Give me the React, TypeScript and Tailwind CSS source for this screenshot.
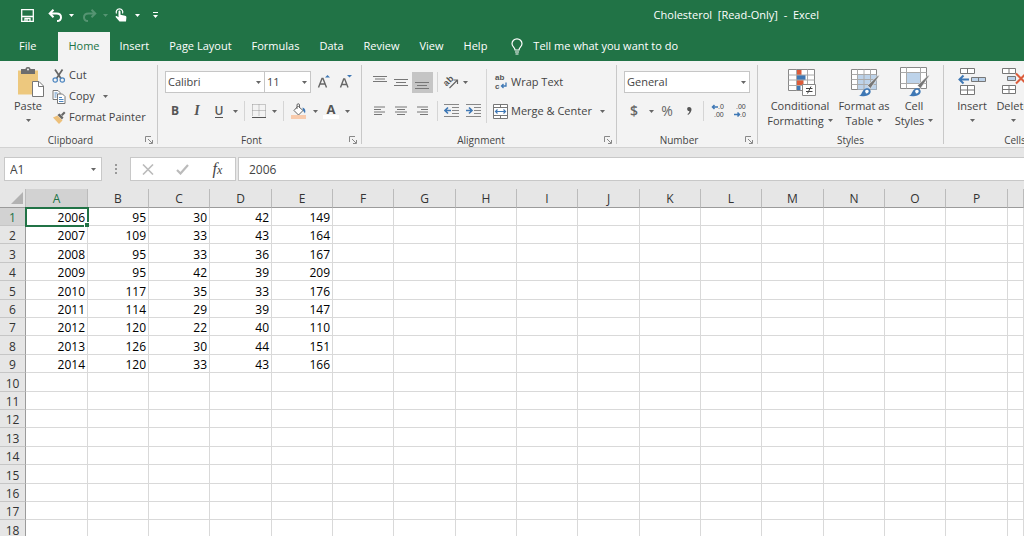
import type { ReactNode } from "react";

const columns = ["A", "B", "C", "D", "E", "F", "G", "H", "I", "J", "K", "L", "M", "N", "O", "P", ""];

const data = [
  [2006, 95, 30, 42, 149],
  [2007, 109, 33, 43, 164],
  [2008, 95, 33, 36, 167],
  [2009, 95, 42, 39, 209],
  [2010, 117, 35, 33, 176],
  [2011, 114, 29, 39, 147],
  [2012, 120, 22, 40, 110],
  [2013, 126, 30, 44, 151],
  [2014, 120, 33, 43, 166],
];

const tabs = ["Insert", "Page Layout", "Formulas", "Data", "Review", "View", "Help"];

function Caret({ className = "text-[#666]" }: { className?: string }) {
  return (
    <svg width="5" height="3" viewBox="0 0 5 3" className={`shrink-0 ${className}`} fill="currentColor">
      <path d="M0 0h5L2.5 3z" />
    </svg>
  );
}

function CaretButton({ label, className = "text-[#666]" }: { label: string; className?: string }) {
  return (
    <button aria-label={label} className="flex h-5 w-[10px] items-center justify-center">
      <Caret className={className} />
    </button>
  );
}

function Tool({ label, className = "w-[22px]", children }: { label: string; className?: string; children: ReactNode }) {
  return (
    <button aria-label={label} className={`flex h-[21px] shrink-0 items-center justify-center ${className}`}>
      {children}
    </button>
  );
}

function Group({ label, className, launcher = true, children }: { label: string; className: string; launcher?: boolean; children: ReactNode }) {
  return (
    <section aria-label={label} className={`flex shrink-0 flex-col ${className}`}>
      <div className="flex h-[68px]">{children}</div>
      <div className="flex h-[14px] items-center text-[10px] leading-[14px] text-[#444]">
        <span className="flex-1 text-center">{label}</span>
        {launcher && (
          <button aria-label={`${label} settings`} className="w-4">
            <svg width="8" height="8" viewBox="0 0 8 8" fill="none" stroke="#888" className="ml-1">
              <path d="M.5 6V.5H6M3 3l4 4M7.500 4v3.500H4" />
            </svg>
          </button>
        )}
      </div>
    </section>
  );
}

function GroupLine() {
  return <div className="h-[79px] w-px shrink-0 bg-[#c8c8c8]" />;
}

function Sep({ className = "" }: { className?: string }) {
  return <div className={`h-5 w-px shrink-0 bg-[#d5d5d5] ${className}`} />;
}

function Select({ label, value, className }: { label: string; value: string; className: string }) {
  return (
    <div className={`relative shrink-0 ${className}`}>
      <select aria-label={label} className="block h-[22px] w-full appearance-none border border-[#c6c6c6] bg-white pl-[2px] text-[11px] text-[#444] outline-none">
        <option>{value}</option>
      </select>
      <span className="pointer-events-none absolute inset-y-0 right-1 flex items-center">
        <Caret />
      </span>
    </div>
  );
}

function BigButton({ lines, caretBelow = false, className, children }: { lines: string[]; caretBelow?: boolean; className: string; children: ReactNode }) {
  return (
    <button className={`flex shrink-0 flex-col items-center pt-[2px] text-[11px] leading-[15px] text-[#444] ${className}`}>
      {children}
      <span className="mt-px whitespace-nowrap">{lines[0]}</span>
      <span className="flex h-[15px] items-center gap-1 whitespace-nowrap">
        {lines[1]}
        {(caretBelow || lines[1]) && <Caret />}
      </span>
    </button>
  );
}

function Lines({ d }: { d: string }) {
  return (
    <svg width="15" height="15" viewBox="0 0 15 15" fill="none" stroke="#777">
      <path d={d} />
    </svg>
  );
}

function Brush() {
  return (
    <g>
      <path d="M29.500 8.500l-9 13-3-3L28 8.500z" fill="#777" stroke="#f3f3f3" strokeWidth=".6" />
      <path d="M8.500 29c3-.5 3-3.500 5-6 2-2.300 5-2.200 6.400-.6 1.600 2 .6 4.600-2 5.800-3 1.300-6 1-9.400.8z" fill="#3f78b5" />
      <path d="M15 24c1-1.500 3-1.500 3.600-.3.500 1.300-.6 2.600-2.600 2.800z" fill="#fff" />
    </g>
  );
}

function QuickAccess() {
  return (
    <div className="flex items-center text-white">
      <Tool label="Save" className="ml-4 w-[22px]">
        <svg width="13" height="13" viewBox="0 0 13 13" fill="none" stroke="currentColor" strokeWidth="1.300">
          <path d="M.7.7h11.600v11.600H.7zM1 7.500h11" />
          <path d="M4 12V9.500h5V12M6 10v2" />
        </svg>
      </Tool>
      <Tool label="Undo" className="ml-[6px] w-[22px]">
        <svg width="15" height="13" viewBox="0 0 15 13" fill="none" stroke="currentColor" strokeWidth="2">
          <path d="M5.500.7L1.700 4.500l3.800 3.800M2 4.500h6.500c3 0 4.500 1.500 4.500 3.700S11.500 12 9 12" />
        </svg>
      </Tool>
      <CaretButton label="Undo history" className="text-white" />
      <Tool label="Redo" className="ml-[2px] w-[22px] text-[#559472]">
        <svg width="15" height="13" viewBox="0 0 15 13" fill="none" stroke="currentColor" strokeWidth="2">
          <path d="M9.500.7l3.800 3.800-3.800 3.800M13 4.500H6.500C3.500 4.500 2 6 2 8.200S3.500 12 6 12" />
        </svg>
      </Tool>
      <CaretButton label="Redo history" className="text-[#559472]" />
      <Tool label="Touch mode" className="w-[22px]">
        <svg width="12" height="14" viewBox="0 0 12 14">
          <path d="M1.500 5.500a3.300 3.300 0 1 1 6 0" fill="none" stroke="currentColor" strokeWidth="1.200" />
          <path d="M3.500 3.500c0-1.400 2-1.400 2 0v3.300l4.500.9c1 .2 1.500.8 1.400 1.800L11 13.500H4.500L.8 9.300c-.7-1 .4-1.800 1.300-1.100l1.400 1z" fill="currentColor" />
        </svg>
      </Tool>
      <CaretButton label="Touch options" className="text-white" />
      <Tool label="Customize" className="ml-[2px] w-[22px]">
        <svg width="5" height="6" viewBox="0 0 5 6" fill="currentColor">
          <path d="M0 0h5v1H0zM0 3h5L2.500 6z" />
        </svg>
      </Tool>
    </div>
  );
}

function Clipboard() {
  return (
    <Group label="Clipboard" className="w-[157px]">
      <BigButton lines={["Paste", ""]} caretBelow className="w-14">
        <svg width="30" height="30" viewBox="0 0 30 30" className="ml-1">
          <path d="M3 3.500h20v24H3z" fill="#edc87e" />
          <path d="M6 2h4.500c0-2.700 5-2.700 5 0H20v5H6z" fill="#6d6d6d" />
          <circle cx="13" cy="2.500" r="1" fill="#f3f3f3" />
          <path d="M17.500 14.500h6.500l4.500 4.500v10.500h-11z" fill="#fff" stroke="#777" />
          <path d="M23.500 14.500V19.500h5" fill="none" stroke="#777" />
        </svg>
      </BigButton>
      <div className="text-[11px] text-[#444]">
        <button className="-ml-1 flex h-[21px] items-center gap-[3px]">
          <svg width="14" height="14" viewBox="0 0 14 14" fill="none">
            <path d="M3 .5l6 9M10.500.5l-6 9" stroke="#666" strokeWidth="1.700" />
            <circle cx="3.200" cy="11" r="2.200" stroke="#4d86c0" strokeWidth="1.200" />
            <circle cx="10.300" cy="11" r="2.200" stroke="#4d86c0" strokeWidth="1.200" />
          </svg>
          Cut
        </button>
        <div className="flex">
          <button className="-ml-1 flex h-[21px] items-center gap-[3px]">
            <svg width="14" height="14" viewBox="0 0 14 14" fill="#fff" stroke="#777">
              <path d="M1 .5h5l2 2v7H1z" />
              <path d="M5.500 4h5l2.500 2.500v7H5.500z" />
              <path d="M2.500 3h3M2.500 5h2M2.500 7h2M7 7.500h3M7 9.500h4.500M7 11.500h4.500" stroke="#4d86c0" />
            </svg>
            Copy
          </button>
          <span className="ml-[6px]">
            <CaretButton label="Copy options" />
          </span>
        </div>
        <button className="-ml-1 flex h-[21px] items-center gap-[3px] whitespace-nowrap">
          <svg width="14" height="14" viewBox="0 0 14 14">
            <path d="M1 6.500l4.500-2 5 5L7 13z" fill="#edc07a" />
            <path d="M5.500 4l2-1.500 4 4-1.500 2z" fill="#666" />
            <path d="M9 3.500L12 .5l1.500 1.500-3 3z" fill="#666" />
          </svg>
          Format Painter
        </button>
      </div>
    </Group>
  );
}

function FontGroup() {
  return (
    <Group label="Font" className="w-[203px]">
      <div className="pl-[7px] text-[#555]">
        <div className="flex h-[34px] items-center">
          <Select label="Font" value="Calibri" className="w-[100px]" />
          <Select label="Font size" value="11" className="-ml-px w-[47px]" />
          <Tool label="Increase font size" className="ml-[2px] w-[22px]">
            <svg width="14" height="16" viewBox="0 0 14 16" fill="none">
              <path d="M1.500 13.500l3.500-9h1l3.500 9M3 10h5" stroke="#666" strokeWidth="1.400" />
              <path d="M8 3.500h5L10.500 1z" fill="#3f78b5" />
            </svg>
          </Tool>
          <Tool label="Decrease font size">
            <svg width="14" height="16" viewBox="0 0 14 16" fill="none">
              <path d="M1.500 13.500L4.700 5h1L9 13.500M3 10.500h5" stroke="#666" strokeWidth="1.400" />
              <path d="M8 1h5l-2.500 2.500z" fill="#3f78b5" />
            </svg>
          </Tool>
        </div>
        <div className="-ml-px flex h-6 items-center">
          <Tool label="Bold">
            <b className="text-xs">B</b>
          </Tool>
          <Tool label="Italic">
            <i className="font-['Liberation_Serif',serif] text-sm font-bold">I</i>
          </Tool>
          <Tool label="Underline">
            <span className="border-b border-[#555] text-xs font-semibold leading-[13px]">U</span>
          </Tool>
          <CaretButton label="Underline styles" />
          <Sep className="mx-1" />
          <Tool label="Borders" className="w-[20px]">
            <svg width="14" height="14" viewBox="0 0 14 14" fill="none" stroke="#999">
              <path d="M.5.5h13v12M.5.5v12M7 .5v12M.5 6.500h13" strokeDasharray="1 1" />
              <path d="M0 13.500h14" stroke="#555" />
            </svg>
          </Tool>
          <CaretButton label="Border styles" />
          <Sep className="mx-1" />
          <Tool label="Fill color">
            <svg width="16" height="16" viewBox="0 0 16 16" fill="none">
              <path d="M6.500 3.500l-3.500 4 4.500 4.500 4.500-4.500-4.500-4z" fill="#fff" stroke="#666" />
              <path d="M6 6V2c0-1.700 2.500-1.700 2.500 0v3" stroke="#666" />
              <path d="M11.500 4.500c2.500.5 3.500 2.500 2.500 6l-2-3z" fill="#3f78b5" />
              <path d="M0 12h15v4H0z" fill="#f8cbad" />
            </svg>
          </Tool>
          <CaretButton label="Fill colors" />
          <Tool label="Font color">
            <span className="border-b-4 border-white px-1 text-[13px] font-bold leading-3">A</span>
          </Tool>
          <CaretButton label="Font colors" />
        </div>
      </div>
    </Group>
  );
}

function Alignment() {
  return (
    <Group label="Alignment" className="w-[254px]">
      <div className="pl-2">
        <div className="flex h-[34px] items-center">
          <Tool label="Top align" className="w-[21px]">
            <Lines d="M0 1.500h14M2 4h10M0 6.500h14" />
          </Tool>
          <Tool label="Middle align" className="w-[21px]">
            <Lines d="M0 4.500h14M2 7.500h10M0 10.500h14" />
          </Tool>
          <Tool label="Bottom align" className="w-[21px] bg-[#c5c5c5]">
            <Lines d="M0 7.500h14M2 10.500h10M0 13.500h14" />
          </Tool>
          <Sep className="mx-1" />
          <Tool label="Orientation" className="w-[18px]">
            <svg width="16" height="14" viewBox="0 0 16 14" fill="none" stroke="#666" className="overflow-visible">
              <text x="0" y="9" transform="rotate(-45 5 6)" fontSize="9" fill="#555" stroke="none" className="font-['Liberation_Sans',sans-serif] font-bold">
                ab
              </text>
              <path d="M6.500 13l7.500-7.500M10.500 5h4v4" strokeWidth="1.200" />
            </svg>
          </Tool>
          <CaretButton label="Orientation options" />
        </div>
        <div className="flex h-6 items-center">
          <Tool label="Align left" className="w-[21px]">
            <Lines d="M1 3h11M1 5.500h7M1 8h11M1 10.500h8" />
          </Tool>
          <Tool label="Center" className="w-[21px]">
            <Lines d="M1 3h12M3 5.500h8M1 8h12M3 10.500h8" />
          </Tool>
          <Tool label="Align right" className="w-[21px]">
            <Lines d="M2 3h11M6 5.500h7M2 8h11M5 10.500h8" />
          </Tool>
          <Sep className="mx-1" />
          <Tool label="Decrease indent" className="w-[18px]">
            <svg width="15" height="14" viewBox="0 0 15 14" fill="none" stroke="#888">
              <path d="M0 .500h15M8 3.500h7M8 6.500h7M8 9.500h7M0 12.500h15" />
              <path d="M7 6.500H1.500M4 3.500l-3 3 3 3" stroke="#3f78b5" strokeWidth="1.600" />
            </svg>
          </Tool>
          <Tool label="Increase indent" className="ml-1 w-[18px]">
            <svg width="15" height="14" viewBox="0 0 15 14" fill="none" stroke="#888">
              <path d="M0 .500h15M8 3.500h7M8 6.500h7M8 9.500h7M0 12.500h15" />
              <path d="M0 6.500h5.500M3 3.500l3 3-3 3" stroke="#3f78b5" strokeWidth="1.600" />
            </svg>
          </Tool>
        </div>
      </div>
      <div className="ml-1 mt-1 h-[54px] w-px bg-[#d5d5d5]" />
      <div className="pl-[6px] text-[11px] text-[#444]">
        <button className="flex h-[34px] items-center gap-[2px] whitespace-nowrap">
          <svg width="16" height="16" viewBox="0 0 16 16" fill="none" className="overflow-visible">
            <g fontSize="8" fill="#555" className="font-['Liberation_Sans',sans-serif] font-bold">
              <text x="2" y="6">ab</text>
              <text x="2" y="15">c</text>
            </g>
            <path d="M13 8.500v3.500H8.500M10.500 10l-2 2 2 2" stroke="#3f78b5" strokeWidth="1.300" />
          </svg>
          Wrap Text
        </button>
        <div className="flex h-6 items-center">
          <button className="flex items-center gap-[2px] whitespace-nowrap">
            <svg width="16" height="15" viewBox="0 0 16 15" fill="none" stroke="#777">
              <path d="M.5.500h14v14H.5z" fill="#fff" />
              <path d="M.5 3.500h14M.5 11.500h14M7.500.5v3M7.500 11.500v3" />
              <path d="M2.500 7.500h10M4.500 5.500l-2 2 2 2M10.500 5.500l2 2-2 2" stroke="#3f78b5" strokeWidth="1.200" />
            </svg>
            Merge &amp; Center
          </button>
          <span className="ml-[6px]">
            <CaretButton label="Merge options" />
          </span>
        </div>
      </div>
    </Group>
  );
}

function NumberGroup() {
  return (
    <Group label="Number" className="w-[140px]">
      <div className="pl-[7px] text-[#666]">
        <div className="flex h-[34px] items-center">
          <Select label="Number format" value="General" className="w-[126px]" />
        </div>
        <div className="flex h-6 items-center">
          <Tool label="Accounting format" className="w-5">
            <span className="text-sm font-semibold">$</span>
          </Tool>
          <span className="ml-[2px]">
            <CaretButton label="Currencies" />
          </span>
          <Tool label="Percent">
            <span className="text-sm">%</span>
          </Tool>
          <Tool label="Comma style">
            <svg width="5" height="8" viewBox="0 0 5 8" fill="#555">
              <path d="M2 0c3.500 0 3.500 5-1 8L.5 7C2 6 2.500 5 2.300 4-.5 4-.5 0 2 0z" />
            </svg>
          </Tool>
          <Sep className="mx-[3px]" />
          <Tool label="Increase decimal">
            <svg width="14" height="14" viewBox="0 0 14 14" fill="none" className="overflow-visible">
              <g fontSize="7" fill="#444" className="font-['Liberation_Sans',sans-serif]">
                <text x="7" y="5">.0</text>
                <text x="3" y="13">.00</text>
              </g>
              <path d="M7 3H2M3.500 1l-2 2 2 2" stroke="#3f78b5" strokeWidth="1.500" />
            </svg>
          </Tool>
          <Tool label="Decrease decimal">
            <svg width="14" height="14" viewBox="0 0 14 14" fill="none" className="overflow-visible">
              <g fontSize="7" fill="#444" className="font-['Liberation_Sans',sans-serif]">
                <text x="3" y="5">.00</text>
                <text x="7" y="13">.0</text>
              </g>
              <path d="M1 10.500h5M4.500 8.500l2 2-2 2" stroke="#3f78b5" strokeWidth="1.500" />
            </svg>
          </Tool>
        </div>
      </div>
    </Group>
  );
}

function Styles() {
  return (
    <Group label="Styles" className="w-[185px]" launcher={false}>
      <BigButton lines={["Conditional", "Formatting"]} className="ml-[10px] w-16">
        <svg width="30" height="30" viewBox="0 0 30 30" className="ml-1">
          <path d="M1.500 2.500h26v21h-26z" fill="#fff" stroke="#888" />
          <path d="M9.500 3h5v5h-5zM9.500 13h7v5h-7z" fill="#dc5c3b" />
          <path d="M9.500 8h9v5h-9zM9.500 18h4v5h-4z" fill="#3f78b5" />
          <path d="M9.500 2.500v21M20.500 2.500v21M1.500 8h26M1.500 13h26M1.500 18.500h26" fill="none" stroke="#aaa" />
          <path d="M15.500 17.500h13v11h-13z" fill="#fff" stroke="#888" />
          <path d="M19 21.500h6.500M19 24.500h6.500M24 19.500l-3.500 7" fill="none" stroke="#444" />
        </svg>
      </BigButton>
      <BigButton lines={["Format as", "Table"]} className="w-16">
        <svg width="30" height="30" viewBox="0 0 30 30" className="ml-[2px]">
          <path d="M1.500 2.500h25v20h-25z" fill="#fff" stroke="#888" />
          <path d="M8 8h18.500v14.500H8z" fill="#bdd3ea" />
          <path d="M7.500 2.500v20M14 2.500v20M20.500 2.500v20M1.500 7.500h25M1.500 12.500h25M1.500 17.500h25" fill="none" stroke="#aaa" />
          <Brush />
        </svg>
      </BigButton>
      <BigButton lines={["Cell", "Styles"]} className="w-9">
        <svg width="30" height="30" viewBox="0 0 30 30" className="ml-[2px] shrink-0">
          <path d="M.500.500h26v21H.500z" fill="#fff" stroke="#888" />
          <path d="M6.500 6h14v10h-14z" fill="#bdd3ea" />
          <path d="M6.500.5v21M20.500.5v21M.5 5.500h26M.5 16.500h26" fill="none" stroke="#aaa" />
          <Brush />
        </svg>
      </BigButton>
    </Group>
  );
}

function Cells() {
  return (
    <Group label="Cells" className="w-[142px]" launcher={false}>
      <BigButton lines={["Insert", ""]} caretBelow className="ml-2 w-10">
        <svg width="30" height="30" viewBox="0 0 30 30" fill="#fff" stroke="#777">
          <path d="M3.500 1.500h14v5h-14zM10.500 1.500v5M3.500 18.500h14v9h-14zM10.500 18.500v9M3.500 23h14" />
          <path d="M14.500 10.500h14v4h-14zM21.500 10.500v4" fill="#bdd3ea" />
          <path d="M12 12.500H3M6.500 8.500l-4 4 4 4" fill="none" stroke="#3f78b5" strokeWidth="2" />
        </svg>
      </BigButton>
      <BigButton lines={["Delete", ""]} caretBelow className="ml-px w-10">
        <svg width="30" height="30" viewBox="0 0 30 30" fill="#fff" stroke="#777">
          <path d="M4.500 1.500h13v5h-13zM11 1.500v5M4.500 18.500h13v8h-13zM11 18.500v8M4.500 22.500h13" />
          <path d="M9.500 9.500h8v4h-8z" fill="#bdd3ea" />
          <path d="M18 6.500l10 10M28 6.500l-10 10" fill="none" stroke="#dc5c3b" strokeWidth="2" />
        </svg>
      </BigButton>
    </Group>
  );
}

function FormulaBar() {
  return (
    <div className="flex shrink-0 bg-[#e6e6e6] pt-[9px] pb-[8px] text-xs text-[#444]">
      <div className="relative ml-1 h-6 w-[98px]">
        <input aria-label="Name box" defaultValue="A1" className="h-6 w-full border border-[#c8c8c8] bg-white pl-[5px] outline-none" />
        <span className="absolute right-1 top-[2px]">
          <CaretButton label="Named cells" />
        </span>
      </div>
      <div className="flex h-6 w-7 items-center justify-center">
        <svg width="2" height="10" viewBox="0 0 2 10" fill="#999">
          <path d="M0 0h2v2H0zM0 4h2v2H0zM0 8h2v2H0z" />
        </svg>
      </div>
      <div className="flex h-6 w-[106px] items-center border border-[#c8c8c8] bg-white pl-[5px]">
        <Tool label="Cancel" className="w-[23px]">
          <svg width="12" height="11" viewBox="0 0 12 11" fill="none" stroke="#bbb" strokeWidth="1.600">
            <path d="M1 .5l10 10M11 .5l-10 10" />
          </svg>
        </Tool>
        <Tool label="Enter" className="ml-3 w-[23px]">
          <svg width="13" height="11" viewBox="0 0 13 11" fill="none" stroke="#bbb" strokeWidth="2.200">
            <path d="M1 6l3.500 3.500L12 1" />
          </svg>
        </Tool>
        <Tool label="Insert function" className="ml-3 w-[23px]">
          <i className="font-['Liberation_Serif',serif] text-base text-[#444]">
            f<span className="text-xs">x</span>
          </i>
        </Tool>
      </div>
      <input aria-label="Formula bar" defaultValue="2006" className="ml-[2px] h-6 min-w-0 flex-1 border-y border-l border-[#c8c8c8] bg-white pl-[10px] outline-none" />
    </div>
  );
}

function Sheet() {
  return (
    <div className="min-h-0 flex-1 overflow-hidden">
      <table className="w-full table-fixed border-separate border-spacing-0 text-xs text-black">
        <colgroup>
          <col className="w-[26px]" />
          {columns.map((_, i) => (
            <col key={i} className="w-[61px] nth-[3n+2]:w-[62px] last:w-auto" />
          ))}
        </colgroup>
        <thead>
          <tr className="h-[19px] bg-[#e6e6e6] leading-4 text-[#333]">
            <th aria-label="Select all" className="border-b border-r border-b-[#9b9b9b] border-r-[#bbb] p-0">
              <svg width="12" height="12" viewBox="0 0 12 12" className="ml-auto mr-[2px]" fill="#b2b2b2">
                <path d="M12 0v12H0z" />
              </svg>
            </th>
            {columns.map((name, i) => (
              <th
                key={i}
                scope="col"
                className={`border-b border-r border-b-[#9b9b9b] border-r-[#bbb] p-0 pt-[2px] font-normal ${i === 0 ? "bg-[#d2d2d2] text-[#217346]" : ""}`}
              >
                {name}
              </th>
            ))}
          </tr>
        </thead>
        <tbody>
          {Array.from({ length: 18 }, (_, row) => (
            <tr key={row} className="h-[18px] leading-[15px] nth-[5n+3]:h-[19px] nth-[5n]:h-[19px]">
              <th
                scope="row"
                className={`border-b border-r border-b-[#c6c6c6] border-r-[#9b9b9b] p-0 pt-[2px] font-normal ${row === 0 ? "bg-[#d2d2d2] text-[#217346]" : "bg-[#e6e6e6] text-[#333]"}`}
              >
                {row + 1}
              </th>
              {columns.map((_, col) => (
                <td
                  key={col}
                  className={`border-b border-r border-[#d9d9d9] bg-white p-0 pt-[2px] pr-[2px] text-right ${row === 0 && col === 0 ? "relative outline-2 -outline-offset-1 outline-[#217346]" : ""}`}
                >
                  {data[row]?.[col]}
                  {row === 0 && col === 0 && (
                    <span className="absolute -bottom-[2px] -right-[2px] size-[5px] border-l border-t border-white bg-[#217346]" />
                  )}
                </td>
              ))}
            </tr>
          ))}
        </tbody>
      </table>
    </div>
  );
}

export default function App() {
  return (
    <main className="flex h-screen flex-col overflow-hidden bg-white font-['Open_Sans','Noto_Sans',sans-serif]">
      {/* Title bar */}
      <header className="flex h-8 shrink-0 items-center bg-[#217346] pb-[2px] text-[11px] text-white">
        <QuickAccess />
        <h1 className="ml-auto mr-[205px] whitespace-pre">Cholesterol  [Read-Only]  -  Excel</h1>
      </header>

      {/* Tabs */}
      <nav className="flex h-[29px] shrink-0 bg-[#217346] text-[11px] text-white">
        <button className="pl-[19px] pr-[22px]">File</button>
        <button className="bg-[#f3f3f3] px-[10px] text-[#217346]">Home</button>
        {tabs.map((tab) => (
          <button key={tab} className="whitespace-nowrap px-[10px]">
            {tab}
          </button>
        ))}
        <button className="ml-[14px] flex items-center gap-[10px] whitespace-nowrap">
          <svg width="12" height="17" viewBox="0 0 12 17" fill="none" stroke="currentColor" strokeWidth="1.200">
            <path d="M4 12c0-2.500-3-3.200-3-6.200a5 5 0 0 1 10 0c0 3-3 3.700-3 6.200zM4 14h4M4.500 16h3" />
          </svg>
          Tell me what you want to do
        </button>
      </nav>

      {/* Ribbon */}
      <div className="flex h-[87px] shrink-0 overflow-hidden border-b border-[#d2d2d2] bg-[#f3f3f3] pt-1">
        <Clipboard />
        <GroupLine />
        <FontGroup />
        <GroupLine />
        <Alignment />
        <GroupLine />
        <NumberGroup />
        <GroupLine />
        <Styles />
        <GroupLine />
        <Cells />
      </div>

      <FormulaBar />
      <Sheet />
    </main>
  );
}
